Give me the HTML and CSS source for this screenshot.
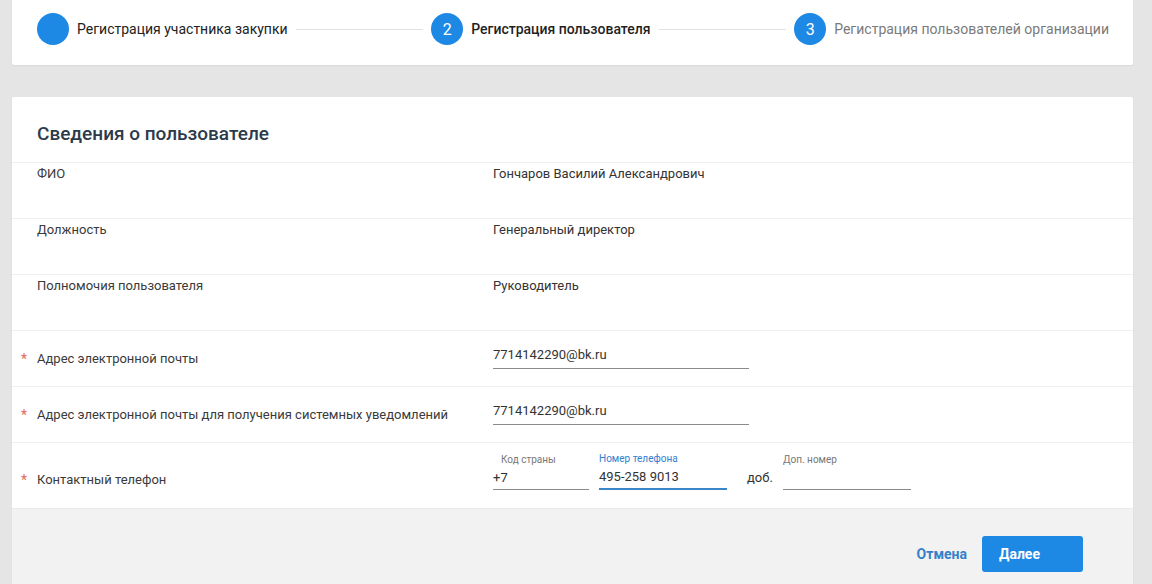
FILE: index.html
```html
<!DOCTYPE html>
<html lang="ru">
<head>
<meta charset="utf-8">
<title>Регистрация пользователя</title>
<link rel="stylesheet" href="styles.css">
</head>
<body>
<div class="page">
  <div class="card stepper">
    <div class="step done">
      <span class="circle"></span>
      <span class="step-text">Регистрация участника закупки</span>
    </div>
    <span class="step-line"></span>
    <div class="step active">
      <span class="circle">2</span>
      <span class="step-text">Регистрация пользователя</span>
    </div>
    <span class="step-line"></span>
    <div class="step next">
      <span class="circle">3</span>
      <span class="step-text">Регистрация пользователей организации</span>
    </div>
  </div>

  <div class="card form">
    <h2 class="title">Сведения о пользователе</h2>

    <div class="row static">
      <div class="label"><span class="star"></span>ФИО</div>
      <div class="value">Гончаров Василий Александрович</div>
    </div>
    <div class="row static">
      <div class="label"><span class="star"></span>Должность</div>
      <div class="value">Генеральный директор</div>
    </div>
    <div class="row static">
      <div class="label"><span class="star"></span>Полномочия пользователя</div>
      <div class="value">Руководитель</div>
    </div>
    <div class="row field">
      <div class="label"><span class="star">*</span>Адрес электронной почты</div>
      <div class="value"><div class="input email">7714142290@bk.ru</div></div>
    </div>
    <div class="row field">
      <div class="label"><span class="star">*</span>Адрес электронной почты для получения системных уведомлений</div>
      <div class="value"><div class="input email">7714142290@bk.ru</div></div>
    </div>
    <div class="row phone">
      <div class="label"><span class="star">*</span>Контактный телефон</div>
      <div class="value phone-fields">
        <div class="pfield code">
          <div class="plabel">Код страны</div>
          <div class="input">+7</div>
        </div>
        <div class="pfield number">
          <div class="plabel focus">Номер телефона</div>
          <div class="input focused">495-258 9013</div>
        </div>
        <div class="dob">доб.</div>
        <div class="pfield ext">
          <div class="plabel">Доп. номер</div>
          <div class="input"></div>
        </div>
      </div>
    </div>

    <div class="footer">
      <span class="cancel">Отмена</span>
      <span class="btn">Далее</span>
    </div>
  </div>
</div>
</body>
</html>
```

FILE: styles.css
```css
* { box-sizing: border-box; }
html, body { margin: 0; padding: 0; }
body {
  background: #e5e5e5;
  font-family: Roboto, "Liberation Sans", Arial, sans-serif;
  color: #333;
  width: 1152px;
  height: 584px;
  overflow: hidden;
}
.page {
  padding: 0 19px 0 12px;
  display: flex;
  flex-direction: column;
  gap: 32px;
}
.card {
  background: #fff;
  box-shadow: 0 1px 2px rgba(0,0,0,0.06);
}
.stepper {
  height: 65px;
  display: flex;
  align-items: flex-start;
  padding: 13px 24px 0 25px;
  border-radius: 0 0 2px 2px;
}
.step {
  display: flex;
  align-items: center;
  flex: none;
}
.circle {
  width: 32px;
  height: 32px;
  border-radius: 50%;
  background: #1e88e5;
  color: #fff;
  font-size: 16px;
  display: flex;
  align-items: center;
  justify-content: center;
  margin-right: 8px;
  flex: none;
}
.step-text { font-size: 14px; line-height: 20px; color: #222; }
.step.active .step-text { font-weight: 500; color: #1f1f1f; }
.step.next .step-text { color: #7a7a7a; }
.step-line {
  flex: 1;
  height: 1px;
  background: #e2e2e2;
  margin: 16px 8px 0;
}

.form { border-radius: 2px 2px 0 0; }
.title {
  margin: 0;
  padding: 25px 25px 16px;
  font-size: 19px;
  line-height: 24px;
  font-weight: 500;
  color: #2c3a4b;
}
.row {
  display: grid;
  grid-template-columns: 472px 1fr;
  padding-left: 9px;
  border-top: 1px solid #efefef;
  font-size: 13px;
  line-height: 16px;
}
.row.static { height: 56px; padding-top: 3px; align-items: start; }
.row.field { height: 56px; align-items: center; }
.row.phone { height: 66px; align-items: start; padding-top: 10px; }
.row.phone .label { padding-top: 19px; }
.label { display: flex; color: #3a3a3a; }
.value { color: #333; }
.star {
  width: 16px;
  flex: none;
  color: #e06a5a;
  font-size: 14px;
}
.input {
  height: 24px;
  line-height: 20px;
  font-size: 13px;
  color: #333;
  border-bottom: 1px solid #8a8a8a;
}
.row.field .value { padding-bottom: 3px; }
.input.email { width: 256px; }
.phone-fields { display: flex; align-items: flex-end; }
.pfield { display: flex; flex-direction: column; }
.pfield .input { padding-top: 2px; }
.plabel {
  font-size: 10px;
  line-height: 12px;
  color: #777;
  margin-bottom: 0;
}
.plabel.focus { color: #2f80d0; }
.code { width: 96px; margin-right: 10px; }
.code .plabel { padding-left: 8px; }
.number { width: 128px; margin-right: 20px; }
.ext { width: 128px; }
.input.focused { border-bottom: 2px solid #3a86c8; height: 25px; }
.dob {
  font-size: 13px;
  line-height: 20px;
  padding-bottom: 2px;
  width: 36px;
  color: #333;
}

.footer {
  background: #f2f2f2;
  height: 76px;
  display: flex;
  justify-content: flex-end;
  align-items: flex-start;
  padding: 27px 50px 0 0;
  border-top: 1px solid #eaeaea;
}
.cancel {
  font-size: 14px;
  font-weight: 700;
  color: #3580c8;
  line-height: 36px;
  margin-right: 15px;
}
.btn {
  width: 101px;
  height: 36px;
  border-radius: 3px;
  background: #1e88e5;
  color: #fff;
  font-size: 14px;
  font-weight: 700;
  line-height: 36px;
  padding-left: 17px;
}
```
